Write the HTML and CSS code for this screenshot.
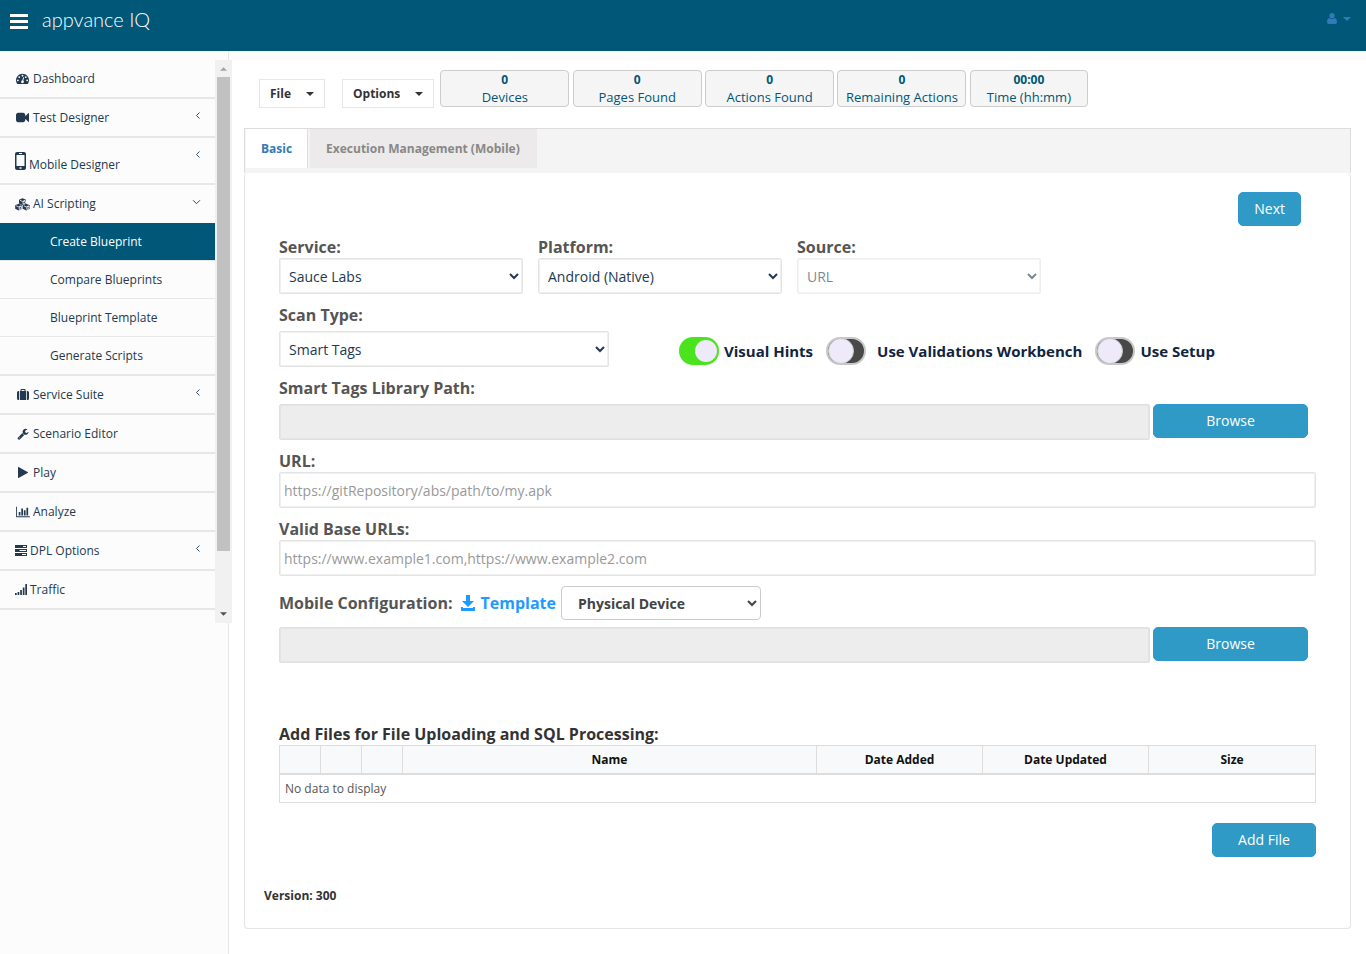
FILE: index.html
```html
<!DOCTYPE html>
<html lang="en">
<head>
<meta charset="utf-8">
<meta name="viewport" content="width=device-width, initial-scale=1">
<title>Create Blueprint</title>
<link rel="stylesheet" href="styles.css">
</head>
<body>
<svg class="defs" aria-hidden="true">
  <symbol id="angle-left" viewBox="0 0 6 9"><path d="M4.500 1.500 1.500 4.500l3 3" fill="none" stroke="currentColor" stroke-width=".9"/></symbol>
  <symbol id="angle-down" viewBox="0 0 9 6"><path d="M1 1.200 4.500 4.700 8 1.200" fill="none" stroke="currentColor" stroke-width=".9"/></symbol>
  <symbol id="caret" viewBox="0 0 8 4"><path d="M0 0h8L4 4z" fill="currentColor"/></symbol>
</svg>
<header class="topbar">
  <button class="menu-button" type="button" aria-label="Toggle menu"><span></span><span></span><span></span></button>
  <a class="brand" href="#">appvance IQ</a>
  <button class="user-button" type="button" aria-label="User menu">
    <svg width="10" height="11" viewBox="0 0 10 11"><circle cx="5" cy="2.7" r="2.6" fill="currentColor"/><path d="M2.4 5q2.6 1.8 5.2 0Q10 5.600 10 9q0 2-1.800 2H1.800Q0 11 0 9q0-3.400 2.400-4z" fill="currentColor"/></svg>
    <svg width="8" height="4"><use href="#caret"/></svg>
  </button>
</header>
<div class="layout">
  <aside class="sidebar">
    <div class="scroll-area">
      <nav class="nav" aria-label="Main">
        <a class="nav-item" href="#"><span class="icon"><svg width="13" height="13" viewBox="0 0 1792 1792"><path fill="currentColor" d="M384 1152q0-53-37.500-90.500t-90.500-37.500-90.500 37.500-37.500 90.500 37.500 90.500 90.500 37.500 90.500-37.500 37.500-90.500zm192-448q0-53-37.500-90.500t-90.500-37.500-90.500 37.500-37.500 90.500 37.500 90.500 90.500 37.500 90.500-37.500 37.500-90.500zm428 481l101-382q6-26-7.500-48.500t-38.500-29.500-48 6.500-30 39.500l-101 382q-60 5-107 43.500t-63 98.500q-20 77 20 146t117 89 146-20 89-117q16-60-6-117t-72-91zm660-33q0-53-37.500-90.500t-90.500-37.500-90.500 37.500-37.500 90.500 37.500 90.500 90.500 37.500 90.500-37.500 37.500-90.500zm-640-640q0-53-37.500-90.500t-90.500-37.500-90.500 37.500-37.500 90.500 37.500 90.500 90.500 37.500 90.500-37.500 37.500-90.500zm448 192q0-53-37.500-90.500t-90.500-37.500-90.500 37.500-37.500 90.500 37.500 90.500 90.500 37.500 90.500-37.500 37.500-90.500zm320 448q0 261-141 483-19 29-54 29h-1402q-35 0-54-29-141-221-141-483 0-182 71-348t191-286 286-191 348-71 348 71 286 191 191 286 71 348z"/></svg></span>Dashboard</a>
        <a class="nav-item" href="#"><span class="icon"><svg width="13" height="13" viewBox="0 0 1792 1792"><path fill="currentColor" d="M1792 352v1088q0 42-39 59-13 5-25 5-27 0-45-19l-403-403v166q0 119-84.500 203.500t-203.500 84.500h-704q-119 0-203.500-84.500t-84.500-203.500v-704q0-119 84.500-203.500t203.500-84.500h704q119 0 203.500 84.500t84.500 203.500v165l403-402q18-19 45-19 12 0 25 5 39 17 39 59z"/></svg></span>Test Designer<svg class="angle" width="6" height="9"><use href="#angle-left"/></svg></a>
        <a class="nav-item tall" href="#"><span class="icon narrow"><svg width="11" height="18" viewBox="0 0 11 18"><path fill="currentColor" fill-rule="evenodd" d="M2 0h7q2 0 2 2v14q0 2-2 2H2q-2 0-2-2V2q0-2 2-2zM1.500 3v11h8V3zM4 1v1h3V1zm.5 14.300v1.400h2v-1.400z"/></svg></span>Mobile Designer<svg class="angle" width="6" height="9"><use href="#angle-left"/></svg></a>
        <a class="nav-item open" href="#" aria-expanded="true"><span class="icon"><svg width="15" height="13" viewBox="0 0 15 13"><g fill="currentColor"><path d="M7.500.3 11 1.800v3.600L7.500 7 4 5.400V1.800zM3.700 5.700 7.200 7.300v3.500l-3.500 1.700L.2 10.800V7.300zM11.300 5.700l3.500 1.600v3.500l-3.500 1.700-3.500-1.700V7.300z"/></g><g fill="none" stroke="#fcfcfc" stroke-width=".8"><path d="M5 2.300 7.500 3.400 10 2.300M8 3.800l2.400-1v2.200L8 6zM1.200 7.800l2.500 1.100 2.500-1.100M4.200 9.300l2.300-1v2.200l-2.300 1zM8.800 7.800l2.500 1.100 2.500-1.100M11.800 9.300l2.300-1v2.200l-2.300 1z"/></g></svg></span>AI Scripting<svg class="angle" width="9" height="6"><use href="#angle-down"/></svg></a>
        <div class="subnav">
          <a class="subnav-item active" href="#" aria-current="page">Create Blueprint</a>
          <a class="subnav-item" href="#">Compare Blueprints</a>
          <a class="subnav-item" href="#">Blueprint Template</a>
          <a class="subnav-item" href="#">Generate Scripts</a>
        </div>
        <a class="nav-item" href="#"><span class="icon"><svg width="12" height="11" viewBox="0 0 12 11"><path fill="currentColor" fill-rule="evenodd" d="M3.500 2V.8q0-.8.800-.8h3.400q.8 0 .8.800V2H9v9H3V2zm1-1v1h3V1zM2.200 2v9H1.500Q0 11 0 9.500v-6Q0 2 1.500 2zm7.600 0h.7Q12 2 12 3.500v6q0 1.500-1.500 1.500h-.7z"/></svg></span>Service Suite<svg class="angle" width="6" height="9"><use href="#angle-left"/></svg></a>
        <a class="nav-item" href="#"><span class="icon"><svg width="12" height="12" viewBox="0 0 1792 1792"><path fill="currentColor" d="M448 1472q0-26-19-45t-45-19-45 19-19 45 19 45 45 19 45-19 19-45zm644-420l-682 682q-37 37-90 37-52 0-91-37l-106-108q-38-36-38-90 0-53 38-91l681-681q39 98 114.500 173.500t173.500 114.500zm634-435q0 39-23 106-47 134-164.500 217.500t-258.500 83.500q-185 0-316.500-131.500t-131.500-316.500 131.500-316.500 316.500-131.500q58 0 121.500 16.500t107.500 46.500q16 11 16 28t-16 28l-293 169v224l193 107q5-3 79-48.500t135.500-81 70.500-35.500q15 0 23.500 10t8.500 25z"/></svg></span>Scenario Editor</a>
        <a class="nav-item" href="#"><span class="icon"><svg width="10" height="11" viewBox="0 0 10 11"><path fill="currentColor" d="M.5 0 10 5.300v.4L.5 11H0V0z"/></svg></span>Play</a>
        <a class="nav-item" href="#"><span class="icon"><svg width="14" height="12" viewBox="0 0 2048 1792"><path fill="currentColor" d="M640 896v512h-256v-512h256zm384-512v1024h-256v-1024h256zm1024 1152v128h-2048v-1536h128v1408h1920zm-640-896v768h-256v-768h256zm384-384v1152h-256v-1152h256z"/></svg></span>Analyze</a>
        <a class="nav-item" href="#"><span class="icon narrow"><svg width="12" height="11" viewBox="0 0 12 11"><path fill="currentColor" fill-rule="evenodd" d="M0 0h12v3H0zm8 1v1h3V1zM0 4h12v3H0zm4.500 1v1H11V5zM0 8h12v3H0zm7 1v1h4V9z"/></svg></span>DPL Options<svg class="angle" width="6" height="9"><use href="#angle-left"/></svg></a>
        <a class="nav-item" href="#"><span class="icon narrow"><svg width="12" height="11" viewBox="0 0 12 11"><path fill="currentColor" d="M0 9h1.700v2H0zM2.600 8h1.700v3H2.600zM5.200 6h1.700v5H5.200zM7.800 3.500h1.700V11H7.800zM10.300 0H12v11h-1.700z"/></svg></span>Traffic</a>
      </nav>
      <div class="scrollbar" aria-hidden="true">
        <svg width="7" height="4" viewBox="0 0 8 4"><path d="M0 4h8L4 0z" fill="#a3a3a3"/></svg>
        <div class="thumb"></div>
        <svg class="down" width="7" height="4" viewBox="0 0 8 4"><path d="M0 0h8L4 4z" fill="#505050"/></svg>
      </div>
    </div>
  </aside>
  <main class="content">
    <div class="toolbar">
      <button class="menu" type="button">File<svg width="8" height="4"><use href="#caret"/></svg></button>
      <button class="menu" type="button">Options<svg width="8" height="4"><use href="#caret"/></svg></button>
      <div class="stats">
        <div class="stat"><b>0</b>Devices</div>
        <div class="stat"><b>0</b>Pages Found</div>
        <div class="stat"><b>0</b>Actions Found</div>
        <div class="stat"><b>0</b>Remaining Actions</div>
        <div class="stat time"><b>00:00</b>Time (hh:mm)</div>
      </div>
    </div>
    <div class="tabs" role="tablist">
      <button class="tab selected" type="button" role="tab" aria-selected="true">Basic</button>
      <button class="tab" type="button" role="tab" aria-selected="false">Execution Management (Mobile)</button>
    </div>
    <section class="panel">
      <form class="form">
        <div class="actions"><button class="primary" type="button">Next</button></div>
        <div class="row">
          <div class="field"><label for="service">Service:</label><select class="control" id="service"><option>Sauce Labs</option></select></div>
          <div class="field"><label for="platform">Platform:</label><select class="control" id="platform"><option>Android (Native)</option></select></div>
          <div class="field"><label for="source">Source:</label><select class="control" id="source" disabled><option>URL</option></select></div>
        </div>
        <div class="row scan-row">
          <div class="field spaced scan"><label for="scan">Scan Type:</label><select class="control" id="scan"><option>Smart Tags</option></select></div>
          <div class="toggles">
            <label class="toggle"><input type="checkbox" checked>Visual Hints</label>
            <label class="toggle wide"><input type="checkbox">Use Validations Workbench</label>
            <label class="toggle"><input type="checkbox">Use Setup</label>
          </div>
        </div>
        <div class="field spaced">
          <label for="library">Smart Tags Library Path:</label>
          <div class="browse-row"><input class="control" id="library" type="text" disabled><button class="primary browse" type="button">Browse</button></div>
        </div>
        <div class="field"><label for="url">URL:</label><input class="control" id="url" type="text" placeholder="https://gitRepository/abs/path/to/my.apk"></div>
        <div class="field"><label for="base">Valid Base URLs:</label><input class="control" id="base" type="text" placeholder="https://www.example1.com,https://www.example2.com"></div>
        <div class="config">
          <div class="config-head">
            <label for="device">Mobile Configuration:</label>
            <a class="template" href="#"><svg width="16" height="16" viewBox="0 0 16 16"><path fill="currentColor" d="M6 0h4v6h4l-6 6-6-6h4zM1 12h2v1h10v-1h2v4H1z"/></svg>Template</a>
            <select class="device" id="device"><option>Physical Device</option></select>
          </div>
          <div class="browse-row"><input class="control" type="text" aria-label="Mobile configuration file" disabled><button class="primary browse" type="button">Browse</button></div>
        </div>
        <div class="files">
          <h2>Add Files for File Uploading and SQL Processing:</h2>
          <table>
            <colgroup><col class="tool"><col class="tool"><col class="tool"><col><col class="meta"><col class="meta"><col class="meta"></colgroup>
            <thead><tr><th></th><th></th><th></th><th>Name</th><th>Date Added</th><th>Date Updated</th><th>Size</th></tr></thead>
            <tbody><tr><td colspan="7">No data to display</td></tr></tbody>
          </table>
          <button class="primary add" type="button">Add File</button>
        </div>
      </form>
      <p class="version">Version: 300</p>
    </section>
  </main>
</div>
</body>
</html>
```
FILE: styles.css
```css
* { box-sizing: border-box; }
body {
  margin: 0;
  min-height: 100vh;
  display: flex;
  flex-direction: column;
  background: #fcfcfc;
  color: #23394f;
  font: 12px/18px "Open Sans", sans-serif;
}
a { color: inherit; text-decoration: none; }
button, input, select { font-family: inherit; }
svg { flex: none; }
.defs { display: none; }

/* Top bar */
.topbar {
  height: 51px;
  padding: 0 15px 0 10px;
  display: flex;
  align-items: flex-start;
  background: #005778;
}
.menu-button {
  width: 18px;
  margin-top: 14px;
  padding: 0;
  border: 0;
  background: none;
  display: grid;
  gap: 3px;
}
.menu-button span { height: 3px; background: #fff; }
.brand {
  margin: 6px 0 0 14px;
  color: #fff;
  font: 300 20px/26px Lato, sans-serif;
}
.user-button {
  margin: 13px 0 0 auto;
  padding: 0;
  border: 0;
  background: none;
  color: #337ab7;
  display: flex;
  align-items: center;
  gap: 6px;
}

/* Sidebar */
.layout { flex: 1; display: flex; }
.sidebar {
  position: relative;
  z-index: 1;
  flex: none;
  width: 229px;
  padding-top: 9px;
  border-right: 1px solid #e7e7e7;
}
.scroll-area { display: flex; width: 232px; }
.nav { flex: 1; padding-bottom: 13px; }
.nav-item {
  height: 39px;
  padding: 0 14px 0 15px;
  display: flex;
  align-items: center;
  border-bottom: 2px solid #e7e7e7;
}
.nav-item.tall { height: 47px; padding-top: 8px; }
.nav-item.open { height: 38px; border-bottom: 0; }
.icon { width: 18px; padding-right: 3px; display: flex; justify-content: center; }
.icon.narrow { width: 15px; }
.tall .icon { width: 14px; margin-top: -8px; }
.angle { margin: 12px 0 auto auto; }
.tall .angle { margin-top: 4px; }
.open .angle { margin-top: 14px; }
.subnav { border-bottom: 1px solid #e7e7e7; }
.subnav-item {
  height: 38px;
  padding-left: 50px;
  display: flex;
  align-items: center;
  border-bottom: 1px solid #e7e7e7;
}
.subnav-item.active { background: #005778; background-clip: padding-box; color: #fff; }
.scrollbar {
  width: 17px;
  padding: 7px 2px;
  background: #f1f1f1;
  display: flex;
  flex-direction: column;
  align-items: center;
}
.thumb { width: 13px; height: 474px; margin-top: 6px; background: #c1c1c1; }
.scrollbar .down { margin-top: auto; }

/* Content */
.content {
  flex: 1;
  min-width: 0;
  margin-top: 9px;
  padding: 10px 15px 25px;
  background: #fff;
}
.toolbar { display: flex; padding-left: 15px; margin-bottom: 20px; align-items: flex-start; }
.menu {
  height: 29px;
  margin: 9px 17px 0 0;
  padding: 0 10px;
  border: 1px solid #e7e7e7;
  background: #fff;
  color: #333;
  font-size: 12px;
  font-weight: 700;
  display: flex;
  align-items: center;
  gap: 15px;
}
.menu + .menu { margin-right: 6px; }
.stats { color: #005778; font-size: 13px; }
.stat {
  display: inline-block;
  width: 129px;
  height: 37px;
  border: 1px solid #ccc;
  border-radius: 4px;
  background: #f5f5f5;
  text-align: center;
}
.stat.time { width: 118px; }
.stat b { display: block; font-size: 12px; line-height: 17px; }
.tabs {
  height: 45px;
  padding-left: 1px;
  display: flex;
  align-items: flex-start;
  gap: 2px;
  border: 1px solid #ddd;
  border-bottom: 0;
  background: #f4f4f4;
}
.tab {
  height: 39px;
  padding: 0 17px 0 16px;
  border: 0;
  background: #eceaea;
  color: #888;
  font-size: 12px;
  font-weight: 700;
}
.tab.selected { padding: 0 15px; border-right: 1px solid #ddd; background: #fff; color: #337ab7; }
.panel {
  padding: 19px 34px 23px;
  border: 1px solid #e4e4e4;
  border-top: 0;
  border-radius: 4px;
}

/* Form */
.form { display: grid; grid-template-columns: minmax(0, 1fr); gap: 10px; }
.actions { display: flex; justify-content: flex-end; padding-right: 15px; }
.primary {
  height: 34px;
  padding: 0 15px 2px;
  border: 1px solid #2f96d0;
  border-radius: 5px;
  background: #2f9ac6;
  color: #fff;
  font-size: 14px;
}
.row { display: flex; gap: 15px; }
.field { display: grid; }
.row .field { width: 244px; }
.row .scan { width: 330px; }
.field.spaced { row-gap: 5px; }
.field > label, .config label { color: #555; font-size: 16px; line-height: 22px; font-weight: 700; }
.control {
  width: 100%;
  height: 36px;
  padding: 0 4px;
  border: 1px solid #e4e4e4;
  border-radius: 2px;
  box-shadow: inset 0 0 0 1px #f0f0f0;
  background: #fff;
  color: #23394f;
  font-size: 14px;
}
select.control { padding: 0 5px; }
select.control:disabled { opacity: .6; }
input.control:disabled { border-color: #e0e0e0; background: #ededed; box-shadow: inset 0 0 0 1px #e4e4e4; }
.control::placeholder { color: #999; }
.scan-row { gap: 70px; }
.toggles {
  display: flex;
  align-self: flex-end;
  align-items: center;
  gap: 13px;
  height: 32px;
}
.toggle {
  display: flex;
  align-items: center;
  gap: 5px;
  font-size: 15px;
  line-height: 20px;
  font-weight: 700;
  color: #10253f;
}
.toggle.wide { gap: 11px; }
.toggle input {
  appearance: none;
  width: 40px;
  height: 28px;
  margin: 0;
  border: 2px solid #c8c8c8;
  border-radius: 14px;
  background: #484848;
  display: flex;
  align-items: center;
}
.toggle input::before {
  content: "";
  width: 24px;
  height: 24px;
  border: 1px solid #c8c8c8;
  border-radius: 50%;
  background: #eeeafa;
}
.toggle input:checked { border-color: #4be31e; background: #4be31e; justify-content: flex-end; }
.toggle input:checked::before { width: 22px; height: 22px; border: 0; }
.browse-row { display: flex; gap: 3px; padding-right: 8px; }
.browse-row .control { flex: 1; min-width: 0; }
.browse { width: 155px; }
.config { display: grid; gap: 7px; }
.config-head { display: flex; align-items: center; }
.template {
  margin: 0 5px 0 8px;
  color: #1e9bff;
  font-size: 16px;
  font-weight: 700;
  display: flex;
  align-items: center;
  gap: 4px;
}
.device {
  width: 200px;
  height: 34px;
  padding: 0 0 0 12px;
  border: 1px solid #ccc;
  border-radius: 4px;
  background: #fff;
  color: #444;
  font-size: 14px;
  font-weight: 700;
}
.files { display: grid; margin-top: 50px; }
.files h2 { margin: 0; color: #333; font-size: 16px; line-height: 22px; font-weight: 700; }
table { width: 100%; table-layout: fixed; border-collapse: separate; border-spacing: 0; border: 1px solid #ddd; }
.tool { width: 41px; }
.meta { width: 166px; }
th, td { padding: 0 5px; }
th {
  height: 29px;
  border-right: 1px solid #ddd;
  border-bottom: 2px solid #ddd;
  background: #f8f9fb;
  color: #111;
  font-weight: 700;
}
th:last-child { border-right: 0; }
td { height: 27px; color: #555; }
.add { width: 104px; margin-top: 20px; justify-self: end; }
.version { margin: 30px 0 0 -15px; color: #333; font-weight: 700; }
```
